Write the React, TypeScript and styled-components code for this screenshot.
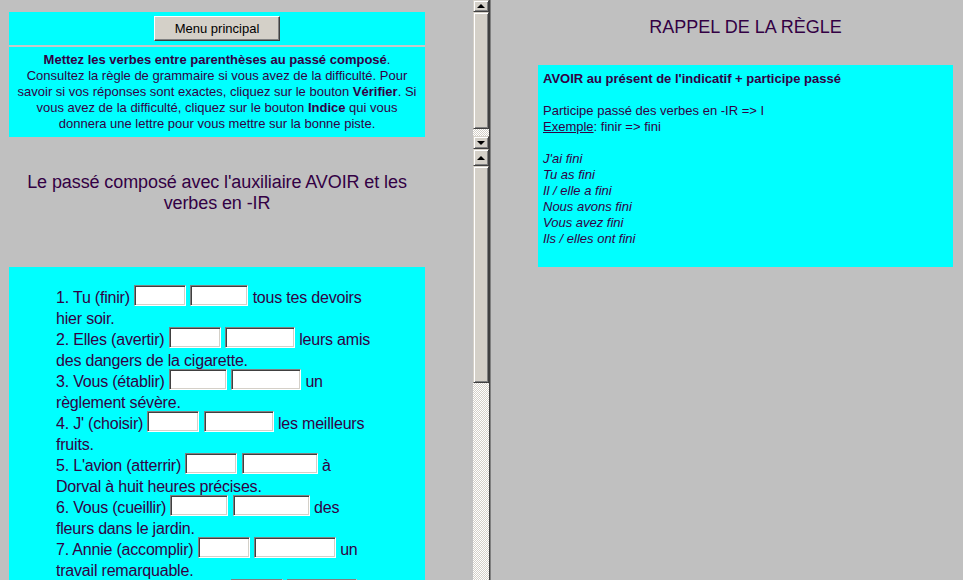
import React from "react";
import styled, { createGlobalStyle } from "styled-components";

const GlobalStyle = createGlobalStyle`
  html, body {
    margin: 0;
    padding: 0;
    background: #c0c0c0;
    overflow: hidden;
  }
  body {
    font-family: "Liberation Sans", Arial, sans-serif;
    color: #330044;
  }
`;

const Window = styled.div`
  display: flex;
  width: 963px;
  height: 580px;
  overflow: hidden;
`;

const LeftColumn = styled.div`
  display: flex;
  flex-direction: column;
  width: 489px;
  flex-shrink: 0;
`;

const Frame = styled.div<{ $height?: number }>`
  display: flex;
  min-height: 0;
  ${(p) => (p.$height ? `height: ${p.$height}px; flex-shrink: 0;` : "flex: 1;")}
`;

const FrameBody = styled.div`
  width: 473px;
  flex-shrink: 0;
  overflow: hidden;
  box-sizing: border-box;
  padding-left: 9px;
`;

const FrameDivider = styled.div`
  width: 2px;
  flex-shrink: 0;
  box-sizing: border-box;
  border-left: 1px solid #404040;
  border-right: 1px solid #808080;
`;

/* classic scrollbar */
const ScrollTrack = styled.div`
  width: 16px;
  flex-shrink: 0;
  display: flex;
  flex-direction: column;
  background-color: #fff;
  background-image: repeating-conic-gradient(#d4d0c8 0 25%, #ffffff 0 50%);
  background-size: 2px 2px;
`;

const Raised = styled.div<{ $h: number }>`
  box-sizing: border-box;
  height: ${(p) => p.$h}px;
  flex-shrink: 0;
  background: #d4d0c8;
  border-top: 1px solid #d4d0c8;
  border-left: 1px solid #d4d0c8;
  border-right: 1px solid #404040;
  border-bottom: 1px solid #404040;
  box-shadow: inset 1px 1px #ffffff, inset -1px -1px #808080;
  display: flex;
  align-items: center;
  justify-content: center;
`;

const Arrow = styled.span<{ $dir: "up" | "down" }>`
  width: 0;
  height: 0;
  border-left: 4px solid transparent;
  border-right: 4px solid transparent;
  ${(p) =>
    p.$dir === "up" ? "border-bottom: 4px solid #000;" : "border-top: 4px solid #000;"}
`;

const TrackGap = styled.div`
  flex: 1;
`;

function Scrollbar({ up, thumb, down }: { up: number; thumb: number; down?: number }) {
  return (
    <ScrollTrack>
      <Raised $h={up}>
        <Arrow $dir="up" />
      </Raised>
      <Raised $h={thumb} />
      <TrackGap />
      {down ? (
        <Raised $h={down}>
          <Arrow $dir="down" />
        </Raised>
      ) : null}
    </ScrollTrack>
  );
}

/* top frame */
const TopBody = styled(FrameBody)`
  padding-top: 12px;
`;

const Panel = styled.div`
  width: 416px;
  background: #00ffff;
`;

const ButtonCell = styled.div`
  height: 33px;
  display: flex;
  align-items: center;
  justify-content: center;
`;

const MenuButton = styled.button`
  box-sizing: border-box;
  width: 126px;
  height: 25px;
  padding: 0;
  background: #d4d0c8;
  font-family: "Liberation Sans", Arial, sans-serif;
  font-size: 13px;
  color: #000;
  border-top: 1px solid #ffffff;
  border-left: 1px solid #ffffff;
  border-right: 1px solid #404040;
  border-bottom: 1px solid #404040;
  box-shadow: inset -1px -1px #808080;
`;

const CellSeparator = styled.div`
  height: 2px;
  background: #c8c8c8;
`;

const Instructions = styled.div`
  padding: 5px 4px;
  font-size: 13px;
  line-height: 16px;
  text-align: center;
`;

/* bottom frame */
const ExerciseTitle = styled.h1`
  width: 416px;
  margin: 23px 0 0;
  font-size: 18px;
  font-weight: normal;
  line-height: 21px;
  letter-spacing: -0.1px;
  text-align: center;
`;

const ExercisePanel = styled(Panel)`
  margin-top: 53px;
  box-sizing: border-box;
  padding: 20px 0 0 47px;
  height: 400px;
`;

const ExerciseList = styled.div`
  width: 318px;
  font-size: 16px;
  line-height: 21px;
  letter-spacing: -0.2px;
`;

const Item = styled.div`
  margin: 0;
`;

const Blank = styled.input<{ $w: number }>`
  box-sizing: border-box;
  width: ${(p) => p.$w}px;
  height: 21px;
  margin: -2px 0 0;
  padding: 0 2px;
  vertical-align: top;
  background: #fff;
  font-family: "Liberation Sans", Arial, sans-serif;
  font-size: 13px;
  border-top: 1px solid #808080;
  border-left: 1px solid #808080;
  border-right: 1px solid #ffffff;
  border-bottom: 1px solid #ffffff;
  box-shadow: inset 1px 1px #404040, inset -1px -1px #d4d0c8;
  outline: none;
`;

/* right frame */
const RightFrame = styled.div`
  flex: 1;
  padding: 17px 0 0 47px;
`;

const RuleColumn = styled.div`
  width: 415px;
`;

const RuleTitle = styled.h2`
  margin: 0;
  font-size: 18px;
  font-weight: normal;
  line-height: 21px;
  text-align: center;
`;

const RuleBox = styled.div`
  margin-top: 27px;
  height: 202px;
  box-sizing: border-box;
  padding: 6px 5px;
  background: #00ffff;
  font-size: 13px;
  line-height: 16px;
`;

const RuleLine = styled.div<{ $bold?: boolean; $italic?: boolean; $gapAfter?: boolean }>`
  font-weight: ${(p) => (p.$bold ? "bold" : "normal")};
  font-style: ${(p) => (p.$italic ? "italic" : "normal")};
  margin-bottom: ${(p) => (p.$gapAfter ? "16px" : "0")};
`;

const items: [string, number, number, string][] = [
  ["1. Tu (finir)", 52, 58, "tous tes devoirs hier soir."],
  ["2. Elles (avertir)", 52, 70, "leurs amis des dangers de la cigarette."],
  ["3. Vous (établir)", 58, 70, "un règlement sévère."],
  ["4. J' (choisir)", 52, 70, "les meilleurs fruits."],
  ["5. L'avion (atterrir)", 52, 76, "à Dorval à huit heures précises."],
  ["6. Vous (cueillir)", 58, 77, "des fleurs dans le jardin."],
  ["7. Annie (accomplir)", 52, 82, "un travail remarquable."],
  ["8. Les étudiants (réussir)", 52, 70, "leurs examens."],
];

const conjugation = [
  "J'ai fini",
  "Tu as fini",
  "Il / elle a fini",
  "Nous avons fini",
  "Vous avez fini",
  "Ils / elles ont fini",
];

export default function App() {
  return (
    <>
      <GlobalStyle />
      <Window>
        <LeftColumn>
          <Frame $height={149}>
            <TopBody>
              <Panel>
                <ButtonCell>
                  <MenuButton>Menu principal</MenuButton>
                </ButtonCell>
                <CellSeparator />
                <Instructions>
                  <b>Mettez les verbes entre parenthèses au passé composé</b>. Consultez la
                  règle de grammaire si vous avez de la difficulté. Pour savoir si vos réponses
                  sont exactes, cliquez sur le bouton <b>Vérifier</b>. Si vous avez de la
                  difficulté, cliquez sur le bouton <b>Indice</b> qui vous donnera une lettre
                  pour vous mettre sur la bonne piste.
                </Instructions>
              </Panel>
            </TopBody>
            <Scrollbar up={12} thumb={117} down={13} />
          </Frame>
          <Frame>
            <FrameBody>
              <ExerciseTitle>
                Le passé composé avec l'auxiliaire AVOIR et les verbes en -IR
              </ExerciseTitle>
              <ExercisePanel>
                <ExerciseList>
                  {items.map(([prefix, w1, w2, rest]) => (
                    <Item key={prefix}>
                      {prefix} <Blank $w={w1} /> <Blank $w={w2} /> {rest}
                    </Item>
                  ))}
                </ExerciseList>
              </ExercisePanel>
            </FrameBody>
            <Scrollbar up={17} thumb={217} />
          </Frame>
        </LeftColumn>
        <FrameDivider />
        <RightFrame>
          <RuleColumn>
            <RuleTitle>RAPPEL DE LA RÈGLE</RuleTitle>
            <RuleBox>
              <RuleLine $bold $gapAfter>
                AVOIR au présent de l'indicatif + participe passé
              </RuleLine>
              <RuleLine>Participe passé des verbes en -IR =&gt; I</RuleLine>
              <RuleLine $gapAfter>
                <u>Exemple</u>: finir =&gt; fini
              </RuleLine>
              {conjugation.map((line) => (
                <RuleLine key={line} $italic>
                  {line}
                </RuleLine>
              ))}
            </RuleBox>
          </RuleColumn>
        </RightFrame>
      </Window>
    </>
  );
}
